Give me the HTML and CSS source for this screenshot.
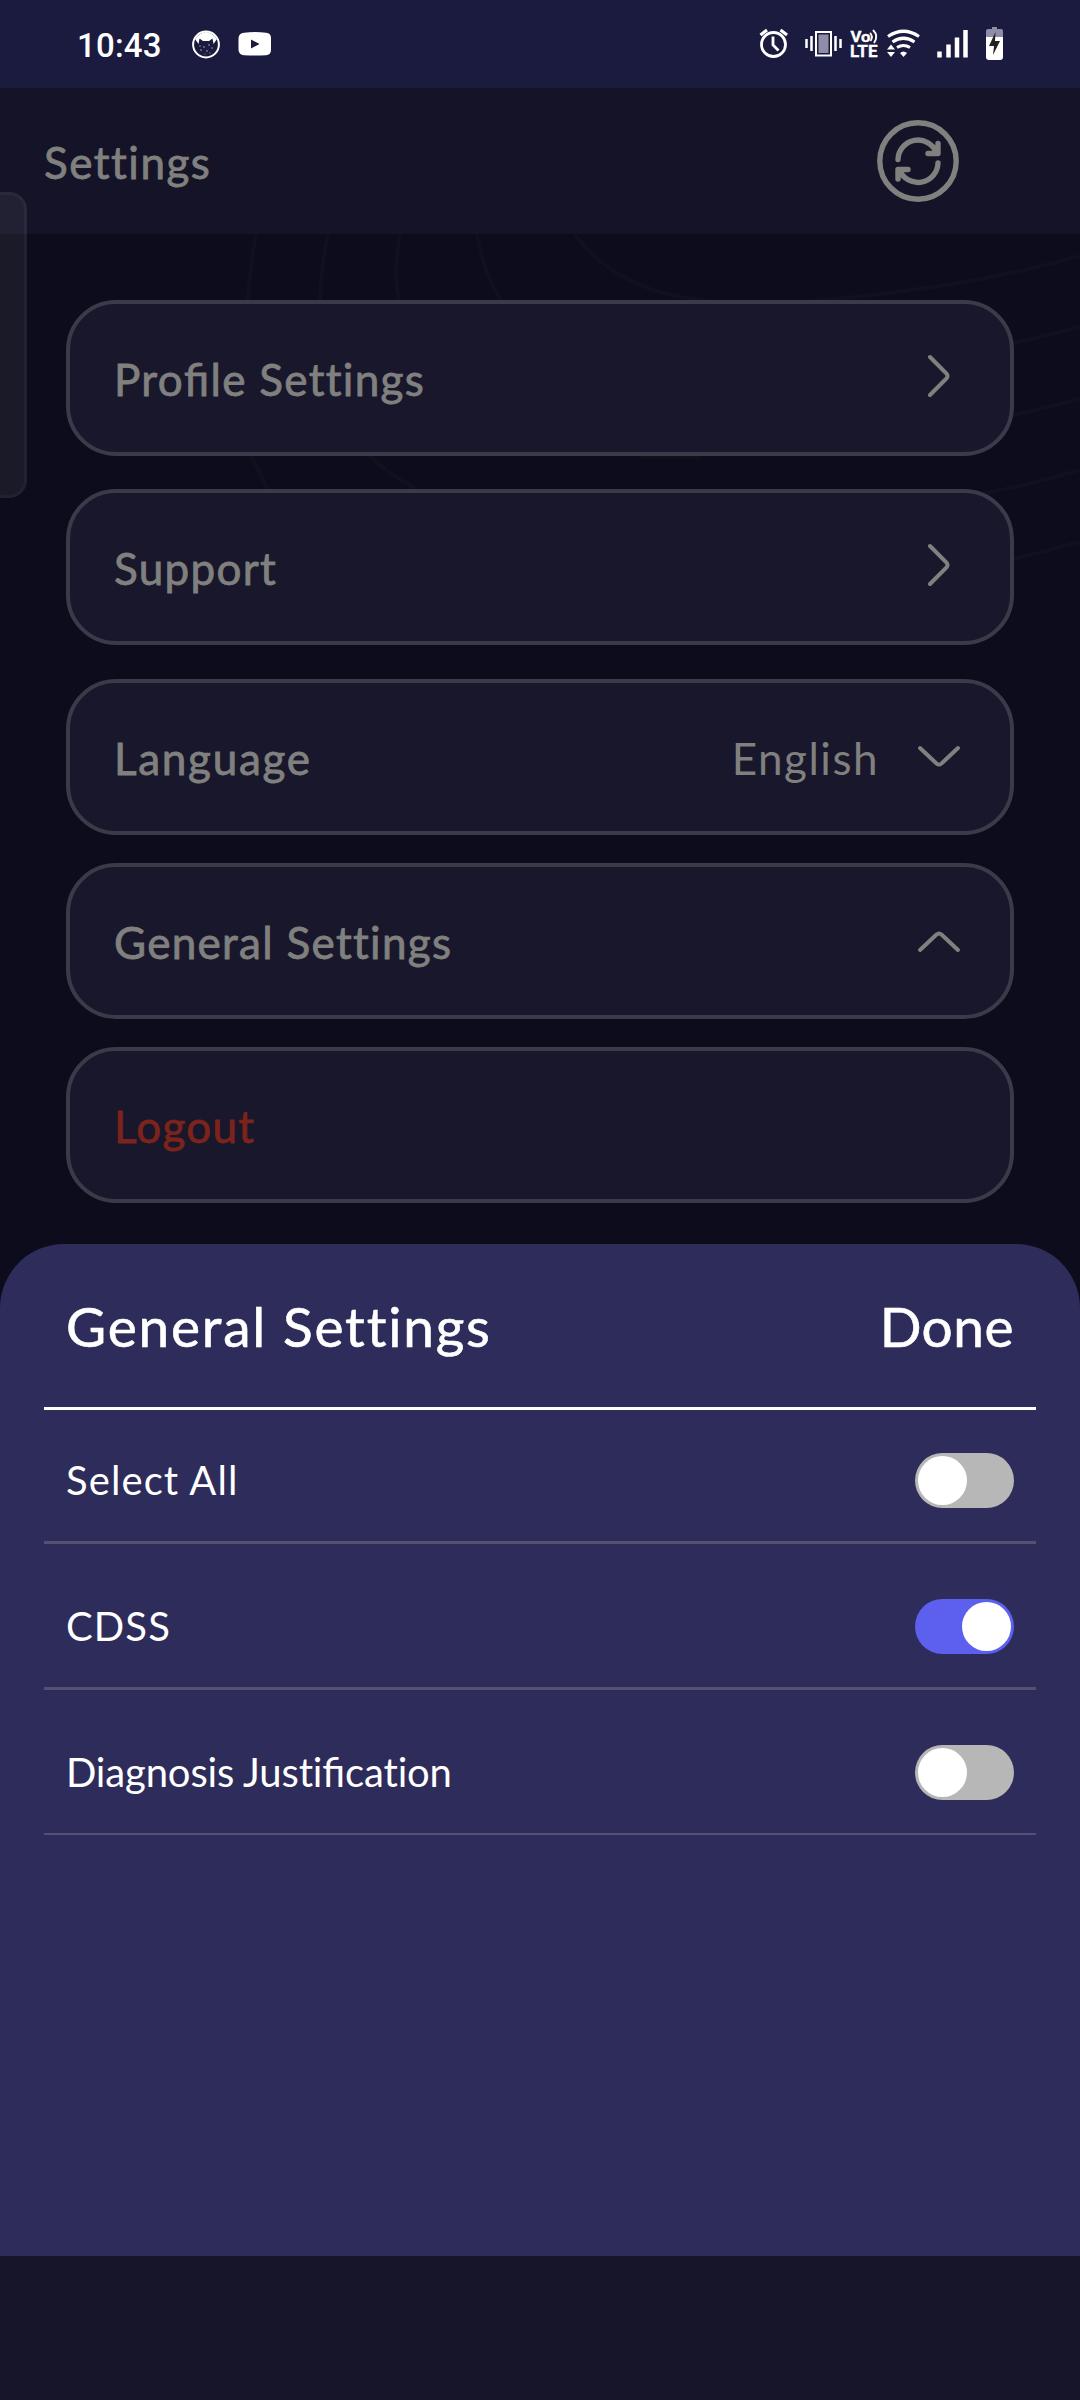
FILE: index.html
```html
<!DOCTYPE html>
<html lang="en">
<head>
<meta charset="utf-8">
<title>Settings</title>
<link rel="stylesheet" href="styles.css">
</head>
<body>
<div class="screen">
  <header class="status-bar">
    <div class="status-left">
      <span class="clock">10:43</span>
      <svg class="cat-icon" width="28" height="29" viewBox="0 0 28 29"><circle cx="14" cy="14.500" r="12.900" fill="none" stroke="#fff" stroke-width="2"/><path d="M3 9Q14-5 25 9L21.500 14 20.500 8.500 17 11H11L7.500 8.500 6.500 14Z" fill="#fff"/><g fill="#aaaac0"><circle cx="8" cy="16" r=".7"/><circle cx="12" cy="17" r=".8"/><circle cx="17" cy="15" r=".8"/><circle cx="20" cy="18" r=".7"/><circle cx="9" cy="20" r=".8"/><circle cx="15" cy="21" r=".8"/><circle cx="13" cy="24" r=".6"/><circle cx="18" cy="23" r=".6"/></g></svg>
      <svg class="video-icon" width="34" height="24" viewBox="0 0 34 24"><path d="M6 .7Q17-.5 28 .7Q33 1 33 6V18Q33 23 28 23.300Q17 23.800 6 23.300Q1 23 .5 18V6Q1 1 6 .7Z" fill="#fff"/><path d="M13 7.500V16.500L21.500 12Z" fill="#1b1b3f"/></svg>
    </div>
    <svg class="status-icons" width="250" height="40" viewBox="755 22 250 40" fill="none" stroke="#fff">
      <circle cx="773.500" cy="44.500" r="12" stroke-width="2.800"/><path d="M773 36.500V45L778.500 50.500" stroke-width="2.800"/><path d="M760.500 35L767 30M787 35L780.500 30" stroke-width="3.200"/>
      <path d="M806.500 39V48M811.500 36V51M835.500 36V51M840.500 39V48" stroke-width="2.500"/><rect x="816" y="32" width="15" height="23.500" stroke-width="2"/><rect x="818.500" y="34.500" width="10" height="18.500" fill="#8e8ca6" stroke="none"/>
      <g class="volte"><text x="850.500" y="42" font-size="14.500" textLength="20" lengthAdjust="spacingAndGlyphs">Vo</text><text x="850" y="57.300" font-size="16" textLength="27.500" lengthAdjust="spacingAndGlyphs">LTE</text></g>
      <path d="M870 33Q873.500 36.500 870.500 41M873 30Q879 36 874 43" stroke-width="1.800"/>
      <path d="M888 36.500Q903.500 26 919 36.500M892.500 42Q903.500 34.500 914.500 42M897 47.500Q903.500 43.500 910 47.500" stroke-width="3.200"/><path d="M900 53Q903.500 50 907 53L903.500 57ZM887 49.500L891 44.500 895 49.500ZM887 52L891 57 895 52Z" fill="#fff" stroke="none"/>
      <path d="M939.500 51.500V57.500M948.500 44.500V57.500M957 37.500V57.500M965.500 30V57.500" stroke-width="4.500"/>
      <path d="M986 37V31Q986 29 988 29H992V27H997V29H1001Q1003 29 1003 31V37Z" fill="#8e8ca6" stroke="none"/><path d="M986 37H1003V57Q1003 60 1000 60H989Q986 60 986 57Z" fill="#fff" stroke="none"/><path d="M995.500 32L989 46H994L993 55L1000 41H995Z" fill="#222" stroke="none"/>
    </svg>
  </header>

  <div class="app-bar">
    <h1 class="page-title">Settings</h1>
    <svg class="refresh" width="82" height="82" viewBox="0 0 82 82" fill="none" stroke="#80807f" stroke-width="5.400" stroke-linecap="round" stroke-linejoin="round"><circle cx="41" cy="41" r="38.200"/><path d="M21 39.500A20 20 0 0 1 59.500 32.500M61 23.500V33.500H51M61 43A20 20 0 0 1 22.500 50M21 59V49.500H31"/></svg>
  </div>

  <main class="content">
    <svg class="contours" width="1080" height="1010" viewBox="0 234 1080 1010" fill="none" stroke="#11101f" stroke-width="4"><path d="M256 234Q236 350 252 457L268 490M328 234Q300 370 370 457Q390 475 415 488M400 234Q392 275 401 310M477 234Q482 268 502 303M575 234C610 285 670 299 730 303S960 290 1080 256M1010 344L1080 327M1010 416L1080 399M640 457H700M980 494Q1030 485 1080 470M1010 560L1080 542"/></svg>
    <section class="links">
      <a class="card"><span class="label">Pro<span class="lig">fi</span>le Settings</span><svg width="24" height="44" viewBox="0 0 24 44" class="chev next"><path d="M3 3L19.500 19.500Q21.500 22 19.500 24.500L3 41"/></svg></a>
      <a class="card"><span class="label">Support</span><svg width="24" height="44" viewBox="0 0 24 44" class="chev next"><path d="M3 3L19.500 19.500Q21.500 22 19.500 24.500L3 41"/></svg></a>
    </section>
    <section class="options">
      <a class="card"><span class="label language">Language</span><span class="value">English</span><svg width="44" height="24" viewBox="0 0 44 24" class="chev"><path d="M3 3L19.500 18.500Q22 20.500 24.500 18.500L41 3"/></svg></a>
      <a class="card"><span class="label">General Settings</span><svg width="44" height="24" viewBox="0 0 44 24" class="chev"><path d="M3 21L19.500 5.500Q22 3.500 24.500 5.500L41 21"/></svg></a>
      <a class="card"><span class="label logout">Logout</span></a>
    </section>
  </main>

  <section class="sheet">
    <div class="sheet-head"><h2 class="sheet-title">General Settings</h2><span class="done">Done</span></div>
    <div class="row first"><span class="name">Select All</span><span class="toggle"></span></div>
    <div class="row"><span class="name">CDSS</span><span class="toggle on"></span></div>
    <div class="row last"><span class="name long">Diagnosis Justi<span class="lig">fi</span>cation</span><span class="toggle"></span></div>
  </section>
  <footer class="nav-area"></footer>
  <div class="edge-handle"></div>
</div>
</body>
</html>
```
FILE: styles.css
```css
* { box-sizing: border-box; margin: 0; }
body { background: #0d0c1c; font-family: Lato, "Noto Sans", sans-serif; font-weight: 400; font-feature-settings: "liga" 0; }
.lig { font-feature-settings: "liga" 1; }
.screen { position: relative; width: 1080px; height: 2400px; display: flex; flex-direction: column; overflow: hidden; }

.status-bar { height: 88px; background: #1b1b3f; display: flex; justify-content: space-between; padding: 0 75px 0 77px; }
.status-left { display: flex; height: 88px; align-items: center; color: #fff; }
.clock { font: 500 33px/88px Roboto, sans-serif; width: 115px; padding-top: 3px; letter-spacing: .2px; }
.cat-icon { margin-right: 18px; }
.status-icons { margin-top: 22px; }
.volte { fill: #fff; stroke: #fff; stroke-width: .3px; font-family: Roboto, sans-serif; font-weight: 700; }

.app-bar { height: 146px; background: #151327; display: flex; align-items: center; justify-content: space-between; padding: 0 121px 0 44px; }
.page-title { font-size: 44px; font-weight: 400; letter-spacing: 1.5px; color: #80807f; -webkit-text-stroke: .8px; padding-top: 2px; }

.content { position: relative; height: 1010px; padding: 66px 66px 0; }
.contours { position: absolute; left: 0; top: 0; }
.links, .options { position: relative; display: flex; flex-direction: column; gap: 33px; }
.options { gap: 28px; margin-top: 34px; }
.card { display: flex; align-items: center; height: 156px; border: 4px solid #3b3a48; border-radius: 50px; background: #19172b; padding: 0 49px 0 44px; color: #80807f; font-size: 44px; }
.label { -webkit-text-stroke: .8px; margin-right: auto; padding-top: 2px; letter-spacing: 1.3px; }
.language { letter-spacing: 1.7px; }
.value { margin-right: 38px; letter-spacing: 1.5px; padding-top: 2px; }
.logout { color: #7c231c; }
.chev { fill: none; stroke: #80807f; stroke-width: 4; stroke-linecap: round; margin-top: -1px; }
.next { margin-right: 10px; margin-top: -4px; }

.sheet { position: relative; height: 1012px; margin-bottom: -1px; background: #2e2c5a; border-radius: 64px 64px 0 0; padding: 0 44px; color: #fff; }
.sheet-head { display: flex; justify-content: space-between; align-items: center; height: 166px; border-bottom: 3px solid #fff; padding: 0 22px; font-size: 55px; -webkit-text-stroke: .6px; }
.sheet-title { font-size: inherit; font-weight: 400; letter-spacing: 1.8px; }
.done { letter-spacing: .5px; }
.row { height: 146px; display: flex; justify-content: space-between; align-items: flex-end; padding: 0 22px 33px; border-bottom: 3px solid #565071; font-size: 40px; line-height: 55px; }
.first { height: 134px; }
.last { height: 145px; border-bottom-width: 2px; }
.name { letter-spacing: 1.1px; }
.long { letter-spacing: -.15px; }
.toggle { width: 99px; height: 55px; border-radius: 28px; background: #b7b7b7; padding: 3px; display: flex; }
.toggle::before { content: ""; width: 49px; height: 49px; border-radius: 50%; background: #fff; }
.on { background: #5d60ef; justify-content: flex-end; }
.nav-area { flex: 1; background: #16152a; }
.edge-handle { position: absolute; left: -20px; top: 192px; width: 47px; height: 306px; border: 3px solid rgba(255,255,255,.035); border-radius: 18px; background: rgba(255,255,255,.06); }
```
